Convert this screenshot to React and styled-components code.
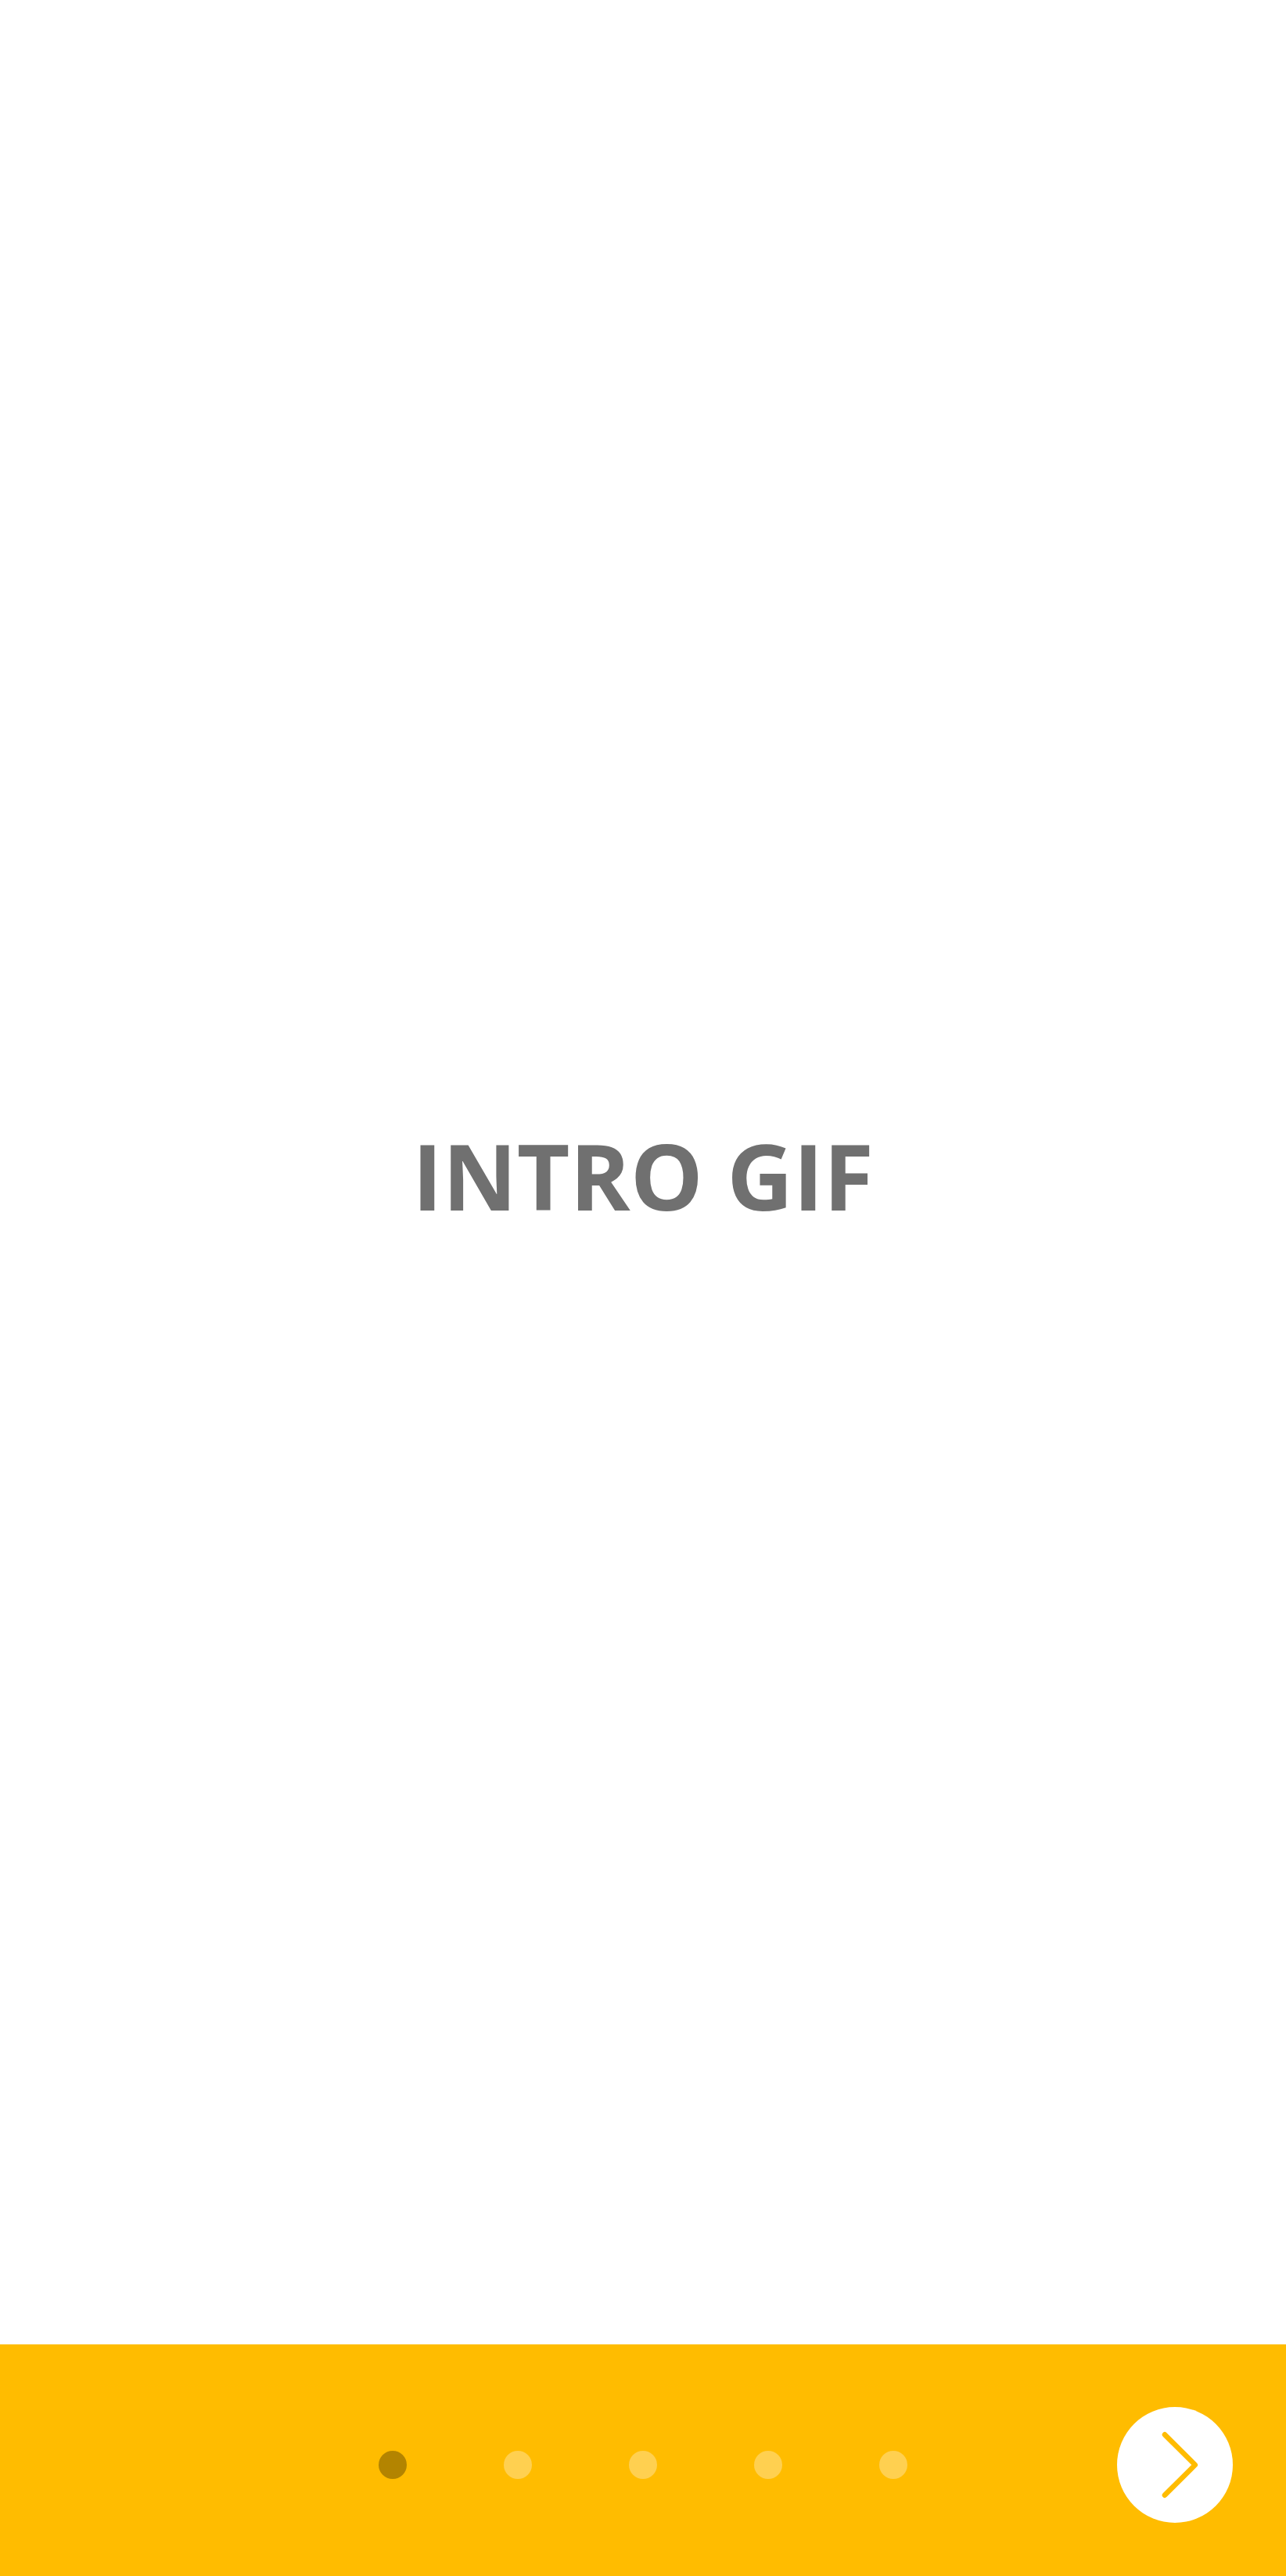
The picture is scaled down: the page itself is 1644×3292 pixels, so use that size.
import React from "react";
import styled, { createGlobalStyle } from "styled-components";

const Global = createGlobalStyle`
  * { box-sizing: border-box; }
  body { margin: 0; background: #fff; font-family: "Open Sans", "Noto Sans", sans-serif; }
`;

const Screen = styled.div`
  min-height: 100vh;
  display: flex;
  flex-direction: column;
`;

const Intro = styled.main`
  flex: 1;
  display: flex;
  align-items: center;
  justify-content: center;
  padding-top: 8px;
`;

const Title = styled.h1`
  margin: 0;
  color: #707070;
  font-size: 117px;
  line-height: 160px;
  font-weight: 700;
`;

const Footer = styled.footer`
  padding: 80px 68px 68px;
  display: grid;
  grid-template-columns: 1fr auto 1fr;
  align-items: center;
  background: #ffbc00;
`;

const Dots = styled.nav`
  grid-column: 2;
  display: flex;
  gap: 124px;
`;

const Dot = styled.button`
  width: 36px;
  height: 36px;
  padding: 0;
  border: 0;
  border-radius: 50%;
  background: ${(p) => (p.$active ? "#b38400" : "#ffd050")};
`;

const Next = styled.button`
  justify-self: end;
  width: 148px;
  height: 148px;
  padding: 0;
  border: 0;
  border-radius: 50%;
  background: #fff;
  color: #ffbc00;
`;

const Chevron = styled.svg`
  display: block;
  width: 148px;
  height: 148px;
`;

export default function App() {
  return (
    <Screen>
      <Global />
      <Intro>
        <Title>INTRO GIF</Title>
      </Intro>
      <Footer>
        <Dots aria-label="Intro pages">
          {[1, 2, 3, 4, 5].map((n) => (
            <Dot key={n} type="button" $active={n === 1} aria-label={`Page ${n}`} />
          ))}
        </Dots>
        <Next type="button" aria-label="Next">
          <Chevron viewBox="0 0 148 148" fill="none" stroke="currentColor" strokeWidth="6.6" strokeLinecap="round" strokeLinejoin="round">
            <path d="M61 35.3 99.8 74 61 112.7" />
          </Chevron>
        </Next>
      </Footer>
    </Screen>
  );
}
